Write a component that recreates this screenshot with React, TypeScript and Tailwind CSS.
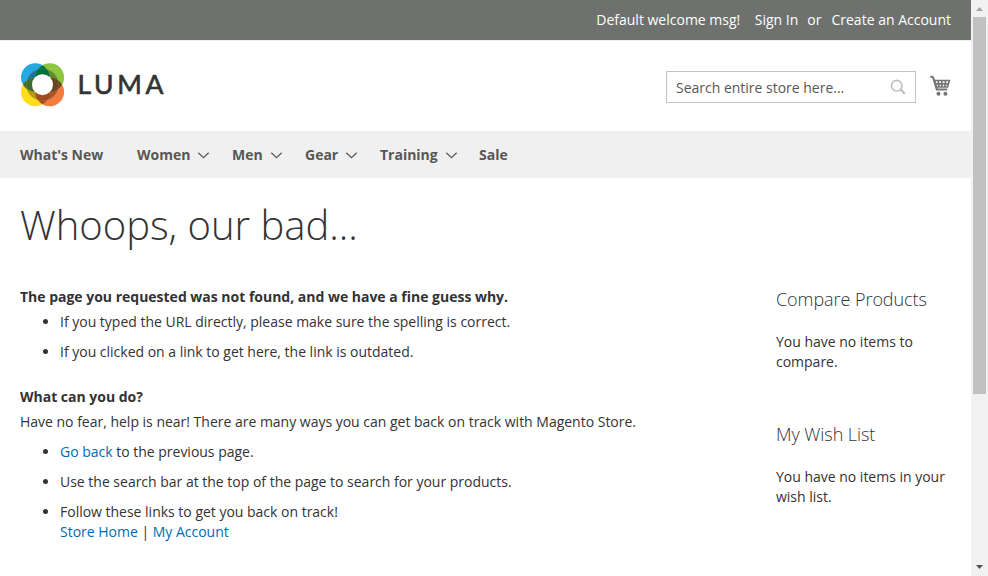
import type { ReactNode } from "react";

const categories = [
  { name: "What's New", menu: false, width: "w-[117px]" },
  { name: "Women", menu: true, width: "w-[95px]" },
  { name: "Men", menu: true, width: "w-[73px]" },
  { name: "Gear", menu: true, width: "w-[75px]" },
  { name: "Training", menu: true, width: "w-[99px]" },
  { name: "Sale", menu: false, width: "w-[40px]" },
];

function Logo() {
  return (
    <svg className="mb-0.5" width="146" height="44" viewBox="0 0 146 44" aria-label="LUMA">
      <circle cx="14.3" cy="14.5" r="14.3" fill="#26a8e0" />
      <circle cx="28.8" cy="14.5" r="14.3" fill="#8cc63f" />
      <circle cx="14.3" cy="29" r="14.3" fill="#ffde17" />
      <circle cx="28.8" cy="29" r="14.3" fill="#f47b3e" />
      <circle cx="21.5" cy="21.7" r="16.3" fill="#000" fillOpacity=".3" />
      <path d="M21.500 2.200a14.300 14.300 0 0 1 0 24.600a14.300 14.300 0 0 1 0-24.600Z" fill="#00703c" />
      <path d="M2 21.700a14.300 14.300 0 0 1 24.600 0a14.300 14.300 0 0 1-24.600 0Z" fill="#426b30" />
      <path d="M41 21.700a14.300 14.300 0 0 1-24.600 0a14.300 14.300 0 0 1 24.600 0Z" fill="#67471e" />
      <path d="M21.500 41.200a14.300 14.300 0 0 1 0-24.600a14.300 14.300 0 0 1 0 24.600Z" fill="#a24a20" />
      <circle cx="21.500" cy="21.700" r="16.300" fill="none" stroke="#fff" strokeOpacity=".18" strokeWidth=".6" />
      <circle cx="21.500" cy="21.700" r="10.500" fill="#fff" />
      <text x="56.500" y="31" className="font-['Lato',sans-serif] text-[26.500px] font-normal" fill="#333" stroke="#333" strokeWidth=".65" textLength="86" lengthAdjust="spacing">LUMA</text>
    </svg>
  );
}

function Chevron() {
  return (
    <svg className="ml-[7px] shrink-0" width="13" height="8" viewBox="0 0 13 8" fill="none" stroke="#575757" strokeWidth="1.2">
      <path d="m1.300 1.700 5.200 5 5.200-5" />
    </svg>
  );
}

function SearchIcon() {
  return (
    <svg width="16" height="16" viewBox="0 0 16 16" fill="none" stroke="#bdbdbd">
      <circle cx="6.700" cy="6.700" r="5.300" strokeWidth="1.600" />
      <path d="m10.500 10.500 4.300 4.300" strokeWidth="2.200" />
    </svg>
  );
}

function CartIcon() {
  return (
    <svg width="22" height="22" viewBox="0 0 22 22" fill="none" stroke="#757575">
      <path d="M.3 1.800h1.800l1.200 1L6.800 14.500h10.500" strokeWidth="2.100" />
      <path d="M4.300 5.500h15l-1.800 6.500H6.300ZM4.800 8.800h14M8.100 5.500l1 6.500M11.800 5.500V12M15.600 5.500 14.800 12" strokeWidth="1.700" />
      <circle cx="8.500" cy="18.700" r="2" fill="#757575" stroke="none" />
      <circle cx="15.400" cy="18.700" r="2" fill="#757575" stroke="none" />
    </svg>
  );
}

function Item({ children }: { children: ReactNode }) {
  return <li className="mb-2.5">{children}</li>;
}

function SideBlock({ title, children }: { title: string; children: ReactNode }) {
  return (
    <section className="h-[135px]">
      <h2 className="text-lg leading-5 font-light tracking-[-0.06px]">{title}</h2>
      <p className="mt-[23px] leading-5">{children}</p>
    </section>
  );
}

export default function App() {
  return (
    <div className="flex h-[576px] w-[988px] overflow-hidden bg-white font-['Open_Sans','Noto_Sans',sans-serif] text-sm leading-5 tracking-[-0.01px] text-[#333]">
      <div className="w-[971px] shrink-0">
        <div className="flex h-10 items-center justify-end bg-[#6e716e] pr-5 font-medium tracking-normal whitespace-nowrap text-white">
          <span>Default welcome msg!</span>
          <a className="ml-[14.500px]">Sign In</a>
          <span className="ml-[9px]">or</span>
          <a className="ml-[10px]">Create an Account</a>
        </div>
        <header className="flex h-[91px] items-center justify-between border-t border-[#f0f0f0] pr-[19px] pl-[21px]">
          <Logo />
          <div className="flex items-center">
            <div className="mt-0.5 flex h-8 w-[250px] items-center justify-between border border-[#c2c2c2] px-[9px] text-[#575757]">
              <span className="pt-0.5">Search entire store here...</span>
              <SearchIcon />
            </div>
            <div className="mb-px ml-[14px]"><CartIcon /></div>
          </div>
        </header>
        <nav className="flex h-[47px] items-center bg-[#f0f0f0] pl-5 font-bold whitespace-nowrap text-[#575757]">
          {categories.map((c) => (
            <a key={c.name} className={"flex shrink-0 items-center " + c.width}>
              {c.name}
              {c.menu && <Chevron />}
            </a>
          ))}
        </nav>
        <div className="px-5 pt-[25px]">
          <h1 className="h-[84px] text-[40px] leading-[44px] font-light">Whoops, our bad...</h1>
          <div className="flex">
            <main className="w-[756px] shrink-0">
              <h3 className="mb-[5px] font-bold">The page you requested was not found, and we have a fine guess why.</h3>
              <ul className="mb-[25px] list-disc pl-10">
                <Item>If you typed the URL directly, please make sure the spelling is correct.</Item>
                <Item>If you clicked on a link to get here, the link is outdated.</Item>
              </ul>
              <h3 className="mb-[5px] font-bold">What can you do?</h3>
              <p className="mb-2.5">Have no fear, help is near! There are many ways you can get back on track with Magento Store.</p>
              <ul className="list-disc pl-10">
                <Item><a className="text-[#006bb4]">Go back</a> to the previous page.</Item>
                <Item>Use the search bar at the top of the page to search for your products.</Item>
                <Item>
                  Follow these links to get you back on track!
                  <br />
                  <a className="text-[#006bb4]">Store Home</a> | <a className="text-[#006bb4]">My Account</a>
                </Item>
              </ul>
            </main>
            <aside className="w-[175px] pt-0.5">
              <SideBlock title="Compare Products">You have no items to compare.</SideBlock>
              <SideBlock title="My Wish List">You have no items in your wish list.</SideBlock>
            </aside>
          </div>
        </div>
      </div>
      <div className="flex w-[17px] shrink-0 flex-col items-center bg-[#f1f1f1]">
        <svg className="shrink-0" width="17" height="17" viewBox="0 0 17 17"><path d="M5 11h7L8.500 7Z" fill="#a3a3a3" /></svg>
        <div className="h-[377px] w-[13px] shrink-0 bg-[#c1c1c1]" />
        <div className="grow" />
        <svg className="shrink-0" width="17" height="17" viewBox="0 0 17 17"><path d="M5 6h7l-3.500 4Z" fill="#505050" /></svg>
      </div>
    </div>
  );
}
